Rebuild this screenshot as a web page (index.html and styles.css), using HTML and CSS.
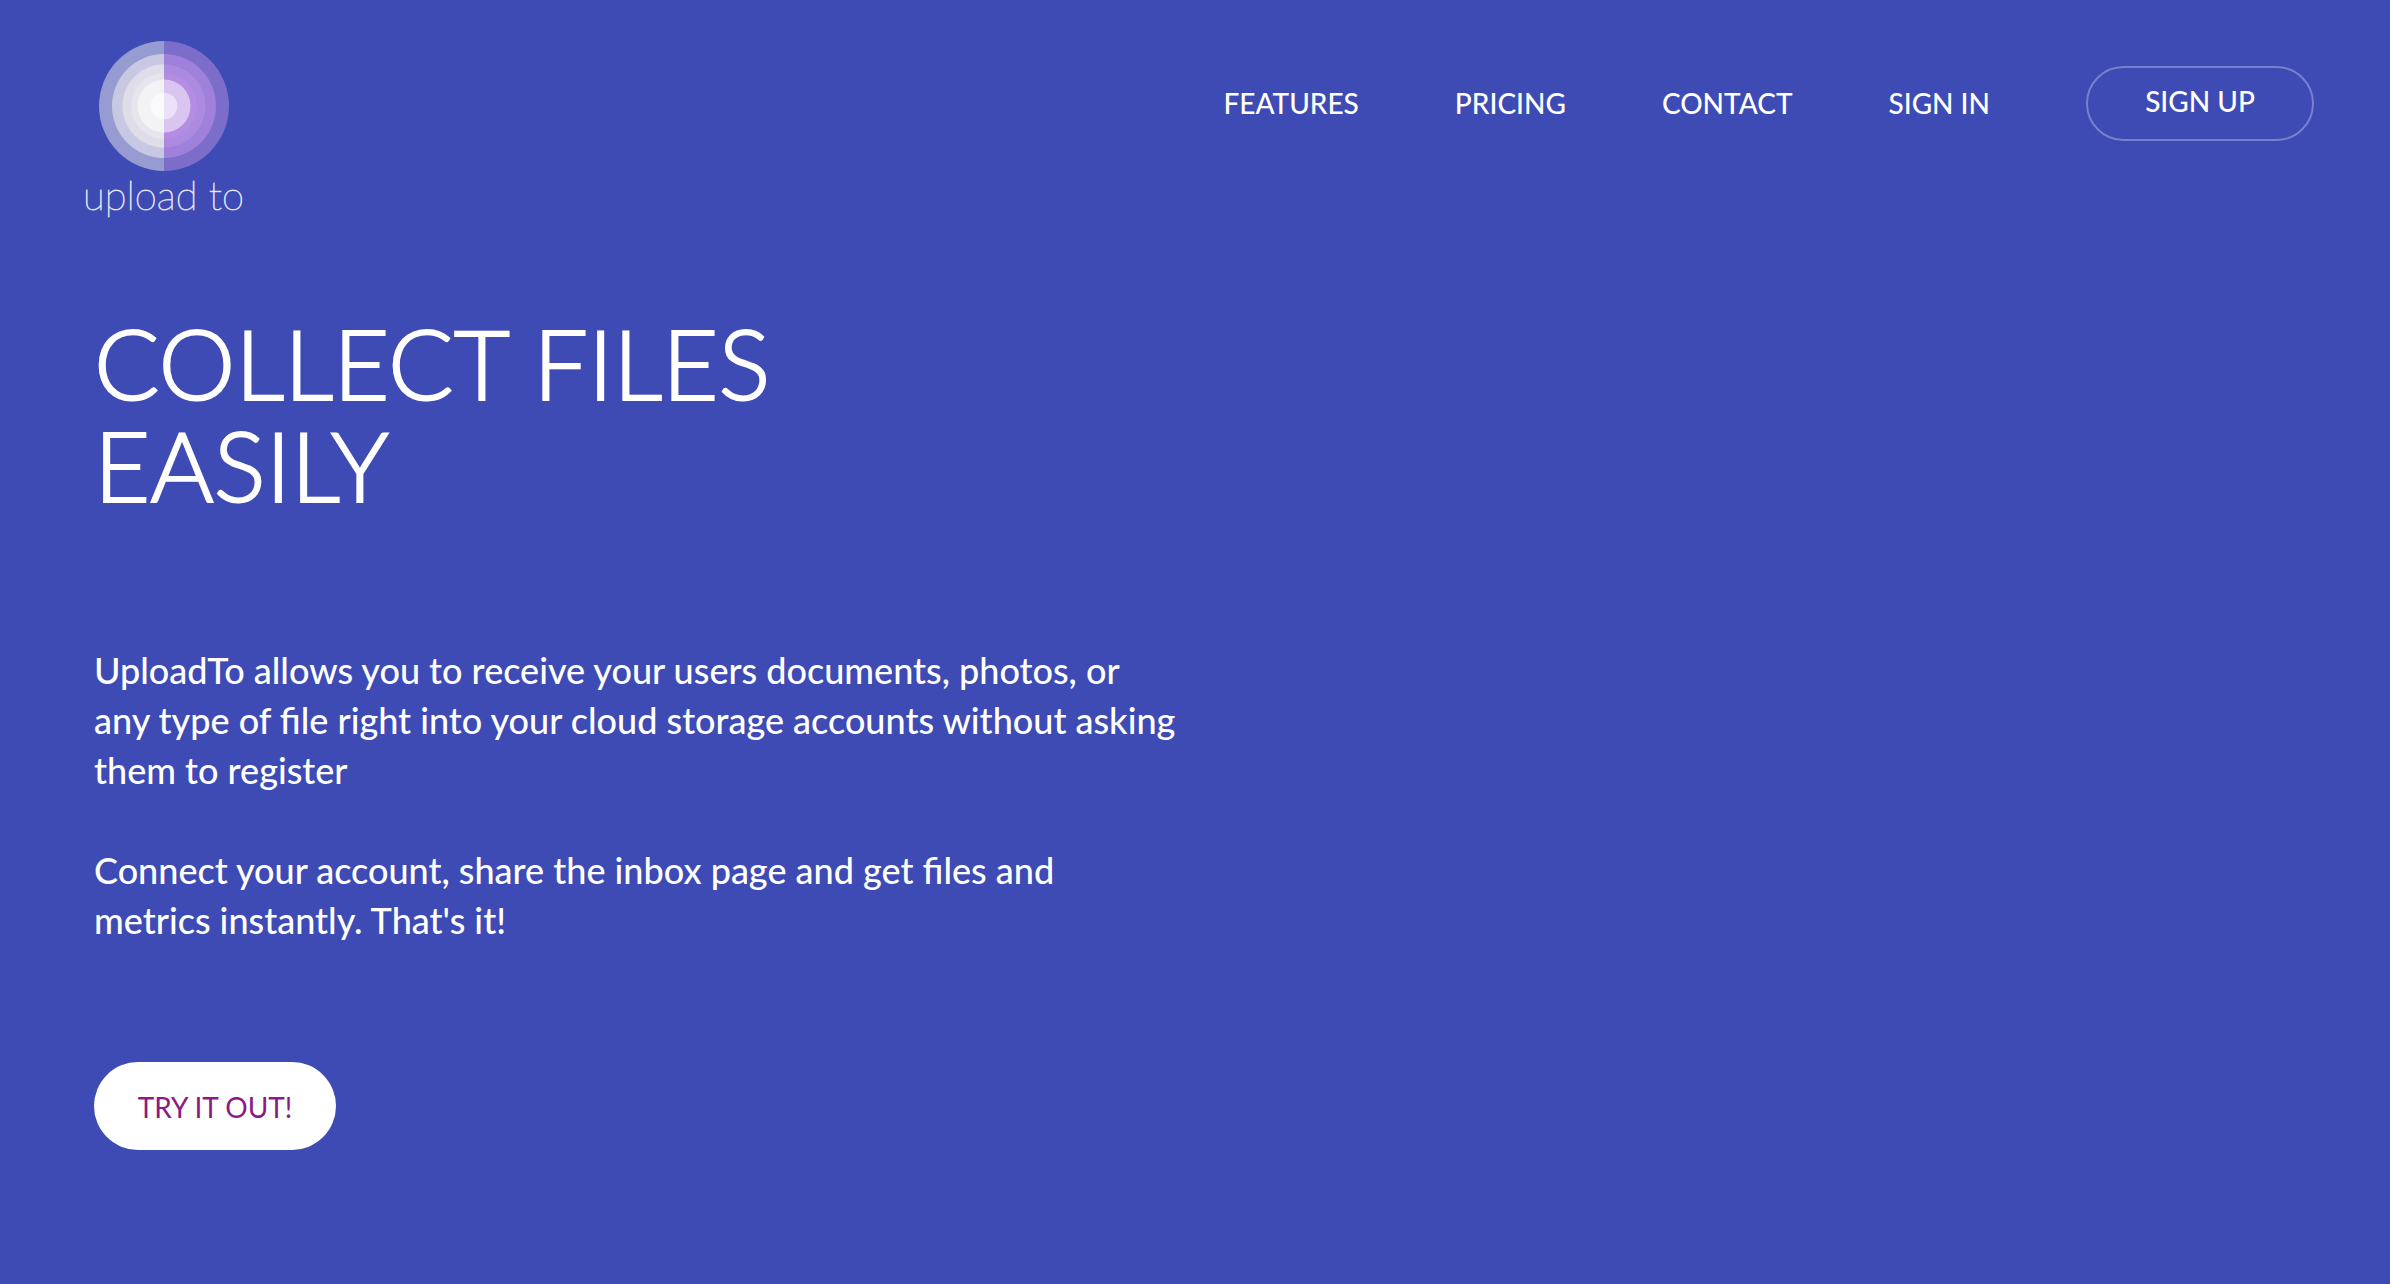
FILE: index.html
```html
<!DOCTYPE html>
<html lang="en">
<head>
  <meta charset="utf-8">
  <meta name="viewport" content="width=device-width, initial-scale=1">
  <title>upload to</title>
  <link rel="stylesheet" href="styles.css">
</head>
<body>
  <header class="header">
    <a class="logo" href="#">
      <svg class="logo-mark" viewBox="-65 -65 130 130" aria-hidden="true">
        <defs>
          <clipPath id="left-half"><rect x="-65" y="-65" width="65" height="130"/></clipPath>
          <clipPath id="right-half"><rect x="0" y="-65" width="65" height="130"/></clipPath>
        </defs>
        <g clip-path="url(#left-half)">
          <circle r="65" fill="#969bd1"/>
          <circle r="52" fill="#c8c8e2"/>
          <circle r="41.7" fill="#dedde9"/>
          <circle r="33" fill="#e6e4ec"/>
          <circle r="26.5" fill="#f3f3f6"/>
          <circle r="13.3" fill="#fafafa"/>
        </g>
        <g clip-path="url(#right-half)">
          <circle r="65" fill="#7d6dcb"/>
          <circle r="52" fill="#9f80da"/>
          <circle r="41.7" fill="#ab8ae0"/>
          <circle r="33" fill="#b48ce4"/>
          <circle r="26.5" fill="#d9c6f0"/>
          <circle r="13.3" fill="#ebe1f9"/>
        </g>
      </svg>
      <span class="logo-name">upload to</span>
    </a>
    <nav class="nav">
      <a class="nav-link" href="#">FEATURES</a>
      <a class="nav-link" href="#">PRICING</a>
      <a class="nav-link" href="#">CONTACT</a>
      <a class="nav-link" href="#">SIGN IN</a>
      <button class="sign-up" type="button">SIGN UP</button>
    </nav>
  </header>
  <main class="hero">
    <h1 class="title">COLLECT FILES<br>EASILY</h1>
    <div class="intro">
      <p class="intro-text">UploadTo allows you to receive your users documents, photos, or<br>
        any type of file right into your cloud storage accounts without asking<br>
        them to register</p>
      <p class="intro-text">Connect your account, share the inbox page and get files and<br>
        metrics instantly. That's it!</p>
    </div>
    <button class="try" type="button">TRY IT OUT!</button>
  </main>
</body>
</html>
```

FILE: styles.css
```css
* {
  box-sizing: border-box;
}

body {
  margin: 0;
  min-height: 100vh;
  background: #3e4bb4;
  color: #fff;
  font-family: Lato, sans-serif;
  font-size: 28px;
}

a {
  color: inherit;
  text-decoration: none;
}

button {
  font: inherit;
  cursor: pointer;
}

.header {
  display: flex;
  justify-content: space-between;
  align-items: flex-start;
  padding: 41px 76px 0 83px;
}

.logo {
  display: flex;
  flex-direction: column;
  align-items: center;
}

.logo-mark {
  width: 130px;
  height: 130px;
}

.logo-name {
  padding-top: 4px;
  font-size: 40px;
  font-weight: 100;
  line-height: 40px;
  -webkit-text-stroke: 1px rgba(255, 255, 255, 0.7);
}

.nav {
  display: flex;
  align-items: center;
  gap: 96px;
  padding-top: 25px;
  font-weight: 500;
}

.nav-link {
  padding-bottom: 2px;
}

.sign-up {
  width: 228px;
  height: 75px;
  padding: 0 0 6px;
  border: 2px solid rgba(255, 255, 255, 0.3);
  border-radius: 38px;
  background: transparent;
  color: #fff;
}

.hero {
  padding: 97px 94px;
}

.title {
  margin: 0 0 129px;
  font-size: 97px;
  font-weight: 300;
  line-height: 102px;
  -webkit-text-stroke: 2px #fff;
}

.intro {
  display: flex;
  flex-direction: column;
  gap: 50px;
  margin-bottom: 117px;
}

.intro-text {
  margin: 0;
  font-size: 36px;
  font-weight: 500;
  line-height: 50px;
}

.try {
  width: 242px;
  height: 88px;
  padding: 2px 0 0;
  border: 0;
  border-radius: 44px;
  background: #fff;
  color: #8b1a86;
}
```
